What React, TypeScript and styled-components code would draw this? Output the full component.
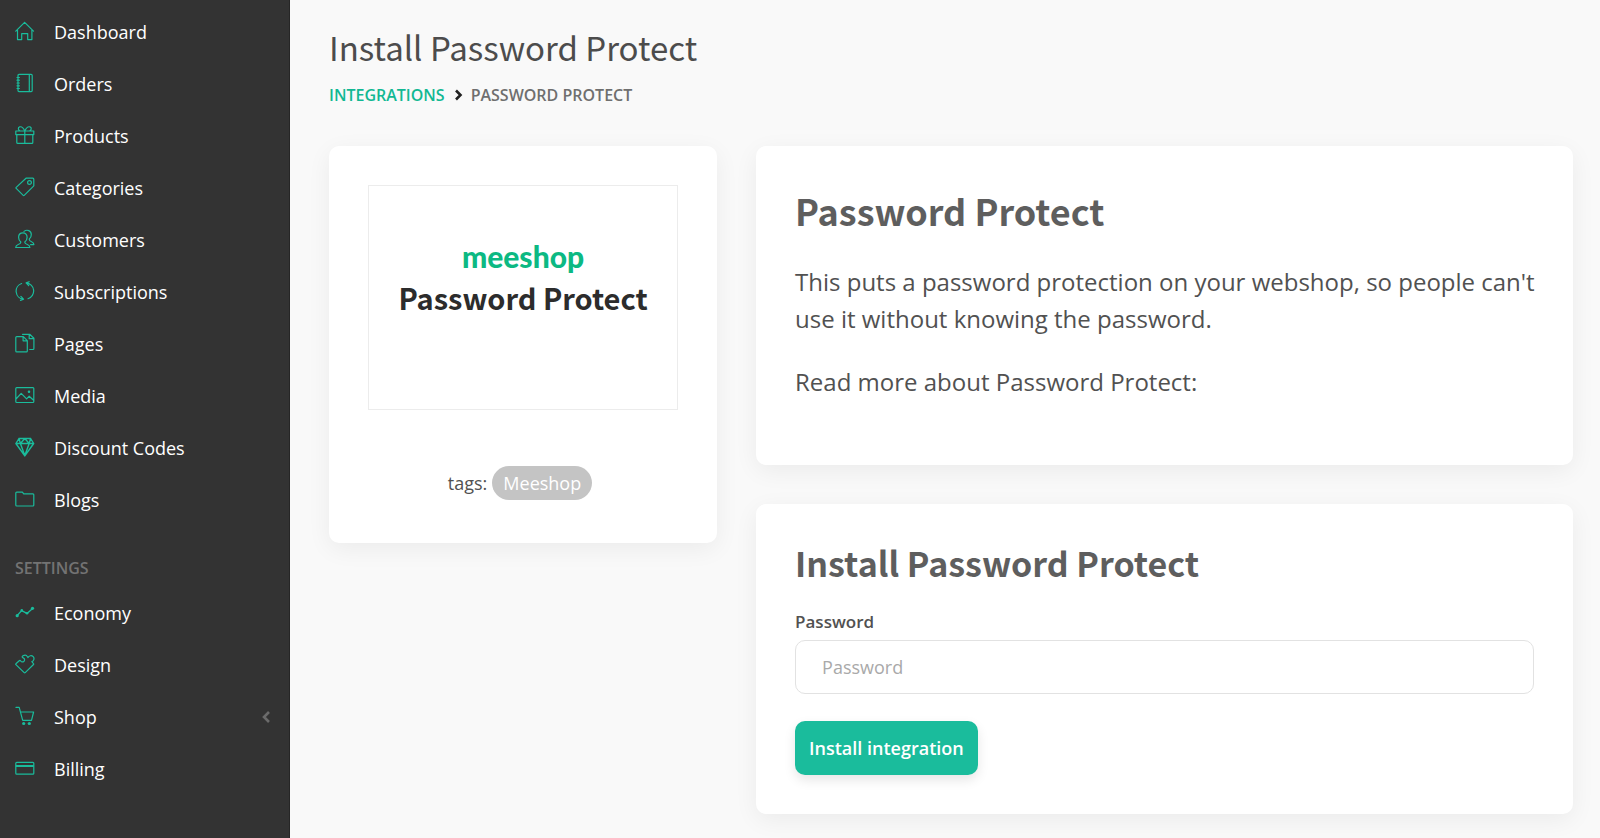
import React from 'react';
import styled, { createGlobalStyle } from 'styled-components';

const accent = '#1abc9c';
const bodyFont = '"Open Sans", "Liberation Sans", sans-serif';
const headingFont = '"Noto Sans CJK SC", "Open Sans", sans-serif';

const GlobalStyle = createGlobalStyle`
  *, *::before, *::after { box-sizing: border-box; }
  body {
    margin: 0;
    background: #f9f9f9;
    color: #515151;
    font-family: ${bodyFont};
    font-size: 18px;
    line-height: 24px;
    -webkit-font-smoothing: antialiased;
  }
  h1, h2, p, ul { margin: 0; padding: 0; }
`;

const Page = styled.div`
  display: flex;
  min-height: 100vh;
`;

const Sidebar = styled.nav`
  flex: 0 0 290px;
  padding: 6px 0 40px;
  background: #333;
  border-right: 1px solid #262626;
`;

const NavList = styled.ul`
  list-style: none;
`;

const NavLink = styled.a`
  display: flex;
  align-items: center;
  height: 52px;
  padding: 0 18px 0 15px;
  color: #fff;
  text-decoration: none;
`;

const NavIcon = styled.svg`
  flex: none;
  width: 20px;
  height: 20px;
  margin: 0 19px 2px 0;
  fill: none;
  stroke: ${accent};
  stroke-width: 1.2;
  stroke-linejoin: round;
  stroke-linecap: round;
`;

const NavLabel = styled.span`
  flex: 1;
`;

const SectionLabel = styled.h2`
  padding: 31px 15px 8px;
  color: #737373;
  font-size: 16px;
  font-weight: 600;
  line-height: 22px;
`;

const Chevron = styled.svg<{ $color: string }>`
  flex: none;
  width: 10px;
  height: 12px;
  fill: none;
  stroke: ${(p) => p.$color};
  stroke-width: 2.6;
`;

const Main = styled.main`
  flex: 1;
  min-width: 0;
  padding: 23px 27px 24px 39px;
`;

const PageTitle = styled.h1`
  color: #4c4c4c;
  font-family: ${headingFont};
  font-size: 33px;
  font-weight: 400;
  line-height: 48px;
`;

const Breadcrumb = styled.div`
  display: flex;
  align-items: center;
  gap: 8px;
  margin: 12px 0 39px;
  color: #6f6f6f;
  font-size: 16px;
  font-weight: 600;
  text-transform: uppercase;

  a {
    color: #12b893;
    text-decoration: none;
  }
`;

const Columns = styled.div`
  display: grid;
  grid-template-columns: minmax(0, 19fr) minmax(0, 40fr);
  align-items: start;
  gap: 39px;
`;

const Stack = styled.div`
  display: grid;
  gap: 39px;
`;

const Card = styled.section`
  padding: 39px;
  border-radius: 10px;
  background: #fff;
  box-shadow: 0 6px 24px rgba(0, 0, 0, 0.06);
`;

const Thumbnail = styled.div`
  height: 225px;
  padding-top: 50px;
  border: 1px solid #ececec;
  text-align: center;
  white-space: nowrap;
`;

const Wordmark = styled.div`
  color: #0cb983;
  font-family: Lato, sans-serif;
  font-size: 30px;
  font-weight: 900;
  line-height: 40px;
`;

const ThumbnailName = styled.div`
  color: #2c2c2c;
  font-family: ${headingFont};
  font-size: 29px;
  font-weight: 700;
  line-height: 42px;
`;

const Tags = styled.div`
  display: flex;
  align-items: center;
  justify-content: center;
  gap: 5px;
  margin: 56px 6px 4px 0;
`;

const Tag = styled.span`
  padding: 5px 11px;
  border-radius: 17px;
  background: #c4c4c4;
  color: #fff;
`;

const CardTitle = styled.h2<{ $compact?: boolean }>`
  color: #5e5e5e;
  font-family: ${headingFont};
  font-size: ${(p) => (p.$compact ? 34 : 36)}px;
  font-weight: 700;
  line-height: ${(p) => (p.$compact ? 40 : 50)}px;
`;

const Description = styled.div`
  display: grid;
  gap: 26px;
  margin-right: -12px;
  padding: 28px 0 26px;
  font-size: 24px;
  line-height: 37px;
`;

const Form = styled.form`
  display: flex;
  flex-direction: column;
  align-items: flex-start;
`;

const FieldLabel = styled.label`
  margin-top: 27px;
  font-size: 17px;
  font-weight: 600;
`;

const TextInput = styled.input`
  width: 100%;
  height: 54px;
  margin: 6px 0 27px;
  padding: 0 26px;
  border: 1px solid #e2e2e2;
  border-radius: 10px;
  background: #fff;
  color: #515151;
  font: inherit;

  &::placeholder {
    color: #a9a9a9;
    opacity: 1;
  }
`;

const PrimaryButton = styled.button`
  height: 54px;
  padding: 0 14px;
  border: 0;
  border-radius: 10px;
  background: ${accent};
  box-shadow: 0 5px 12px rgba(0, 0, 0, 0.1);
  color: #fff;
  font-family: inherit;
  font-size: 18px;
  font-weight: 600;
`;

const icons: Record<string, React.ReactNode> = {
  home: <path d="M.8 10.2 9.6 1.3l8.9 8.9M2.5 9v9.6h4.2v-6h6v6h4.2V9" />,
  notebook: (
    <path d="M4 1.4h12.2q1 0 1 1v15.2q0 1-1 1H4q-1 0-1-1V2.400q0-1 1-1zM14.300 1.400v17.200M2 4.500h2.400M2 7.200h2.400M2 10h2.400M2 12.800h2.400M2 15.500h2.400" />
  ),
  gift: (
    <path d="M.8 6h18v3.600H.8zM1.800 9.600v7.900q0 .9.900.9h14.200q.9 0 .9-.9V9.600M9.800 6v12.400M9.800 6C8.200 2.400 6.200 1.400 4.600 1.900 2.700 2.500 3 5 5.200 6M9.800 6c1.600-3.600 3.600-4.600 5.200-4.100 1.900.6 1.600 3.100-.6 4.100" />
  ),
  tag: (
    <>
      <path d="M11 1.200h6.800q1 0 1 1V8.800L9.200 18.400q-.5.5-1 0l-7-7q-.5-.5 0-1z" />
      <circle cx="14.500" cy="5.500" r="1.900" />
    </>
  ),
  users: (
    <path d="M7.900 3.900c-2.700 0-4.300 1.900-4.300 4.300 0 2.200.9 3.700 2.200 4.700.3 1.500-.7 2-2.600 2.600C1.400 16.100.7 17 .7 18.500h14.200c0-1.500-.7-2.400-2.500-3-1.900-.6-2.900-1.100-2.600-2.600 1.400-1 2.300-2.500 2.300-4.700 0-2.400-1.500-4.300-4.200-4.300zM9 2.400C11.900.1 16.300 1.500 16.300 5.600c0 2-.7 3.500-2 4.500-.3 1.500.7 2 2.300 2.600 1.500.6 2.300 1.300 2.300 2.900h-3.300" />
  ),
  refresh: (
    <path d="M6.600 2.500A8.100 8.100 0 0 0 8.300 18.200M5.900 15.400l2.600 2.800-3 1.200M13 17.700A8.100 8.100 0 0 0 11.200 1.900M13.700 4.600l-2.600-2.700 3-1.200" />
  ),
  docs: (
    <path d="M1.700 3.600h6.600l4 4v10.300q0 .9-.9.900H1.700q-.9 0-.9-.9V4.500q0-.9.900-.9zM8.100 3.800v4h4M7.500 1.300h7.200l4.200 4v10.300q0 .9-.9.900h-3.300M14.200 1.500v4.200h4.500" />
  ),
  picture: (
    <>
      <path d="M1.700 2.700h16.200q.9 0 .9.900v13q0 .9-.9.900H1.700q-.9 0-.9-.9v-13q0-.9.9-.9zM1 14l5.200-5.600 5.400 5.400 2.600-2.600 4.400 4" />
      <circle cx="14" cy="6.800" r=".7" fill={accent} />
    </>
  ),
  diamond: (
    <path
      d="M4 1.500h11.600l3.100 5L9.800 18.900.9 6.500zM.9 6.500h17.800M5.400 6.500l4.400 12 4.400-12M4 1.500l1.400 5 4.400-5 4.400 5 1.400-5"
      strokeWidth="1.400"
    />
  ),
  folder: (
    <path d="M1.700 3.200h5.700l1.300 1.700h9.200q.9 0 .9.900v10.300q0 .9-.9.900H1.700q-.9 0-.9-.9V4.100q0-.9.900-.9z" />
  ),
  graph: (
    <>
      <path d="m2 13.800 4.600-5.200L12 11.400l5.600-5" strokeWidth="1.300" />
      <g fill={accent} stroke="none">
        <circle cx="2.200" cy="13.700" r="1.600" />
        <circle cx="6.800" cy="8.400" r="1.300" />
        <circle cx="12" cy="11.300" r="1.300" />
        <circle cx="17.500" cy="6.300" r="1.600" />
      </g>
    </>
  ),
  puzzle: (
    <path d="M4.500 6.500.9 9.800q-.4.400 0 .8l8.300 8q.5.500 1 0l8.300-8.100q.5-.4 0-.9l-1.700-1.900c2.400-1 2.700-3.600 1.400-5-1.500-1.600-4.200-1.300-5.200.9-.8-1-.9-2.500-2.800-2.500-1.500 0-3.400 1.200-2.900 2.100.5.900 2.300.6 2.300 2.500 0 1.600-1.300 2.500-2.700 2.200C5.400 7.600 5.900 6 4.500 6.500z" />
  ),
  cart: (
    <>
      <path d="M1 1.400h3.200l3.500 12.900h8.800L18.600 6H5.400" />
      <g fill={accent} stroke="none">
        <circle cx="8.700" cy="17.500" r="1.600" />
        <circle cx="14.300" cy="17.500" r="1.600" />
      </g>
    </>
  ),
  card: (
    <>
      <path d="M1.700 4.400h16.200q.9 0 .9.900v10q0 .9-.9.900H1.700q-.9 0-.9-.9v-10q0-.9.900-.9z" />
      <path d="M.8 8h18" strokeWidth="2" strokeLinecap="butt" />
    </>
  ),
};

interface NavEntry {
  icon: string;
  label: string;
  expandable?: boolean;
}

const shopEntries: NavEntry[] = [
  { icon: 'home', label: 'Dashboard' },
  { icon: 'notebook', label: 'Orders' },
  { icon: 'gift', label: 'Products' },
  { icon: 'tag', label: 'Categories' },
  { icon: 'users', label: 'Customers' },
  { icon: 'refresh', label: 'Subscriptions' },
  { icon: 'docs', label: 'Pages' },
  { icon: 'picture', label: 'Media' },
  { icon: 'diamond', label: 'Discount Codes' },
  { icon: 'folder', label: 'Blogs' },
];

const settingsEntries: NavEntry[] = [
  { icon: 'graph', label: 'Economy' },
  { icon: 'puzzle', label: 'Design' },
  { icon: 'cart', label: 'Shop', expandable: true },
  { icon: 'card', label: 'Billing' },
];

function NavEntries({ entries }: { entries: NavEntry[] }) {
  return (
    <NavList>
      {entries.map((entry) => (
        <li key={entry.label}>
          <NavLink href="#">
            <NavIcon viewBox="0 0 20 20" aria-hidden="true">
              {icons[entry.icon]}
            </NavIcon>
            <NavLabel>{entry.label}</NavLabel>
            {entry.expandable && (
              <Chevron $color="#6b6b6b" viewBox="0 0 10 12" aria-hidden="true">
                <path d="M8 1 3 6l5 5" />
              </Chevron>
            )}
          </NavLink>
        </li>
      ))}
    </NavList>
  );
}

export default function App() {
  return (
    <>
      <GlobalStyle />
      <Page>
        <Sidebar>
          <NavEntries entries={shopEntries} />
          <SectionLabel>SETTINGS</SectionLabel>
          <NavEntries entries={settingsEntries} />
        </Sidebar>
        <Main>
          <PageTitle>Install Password Protect</PageTitle>
          <Breadcrumb>
            <a href="#">Integrations</a>
            <Chevron $color="#222" viewBox="0 0 10 12" aria-hidden="true">
              <path d="m3 1.500 4.500 4.500L3 10.500" />
            </Chevron>
            <span>Password Protect</span>
          </Breadcrumb>
          <Columns>
            <Card>
              <Thumbnail>
                <Wordmark>meeshop</Wordmark>
                <ThumbnailName>Password Protect</ThumbnailName>
              </Thumbnail>
              <Tags>
                <span>tags:</span>
                <Tag>Meeshop</Tag>
              </Tags>
            </Card>
            <Stack>
              <Card>
                <CardTitle>Password Protect</CardTitle>
                <Description>
                  <p>
                    This puts a password protection on your webshop, so people can't use it without
                    knowing the password.
                  </p>
                  <p>Read more about Password Protect:</p>
                </Description>
              </Card>
              <Card>
                <Form onSubmit={(event) => event.preventDefault()}>
                  <CardTitle $compact>Install Password Protect</CardTitle>
                  <FieldLabel htmlFor="password">Password</FieldLabel>
                  <TextInput id="password" type="password" placeholder="Password" />
                  <PrimaryButton type="submit">Install integration</PrimaryButton>
                </Form>
              </Card>
            </Stack>
          </Columns>
        </Main>
      </Page>
    </>
  );
}
